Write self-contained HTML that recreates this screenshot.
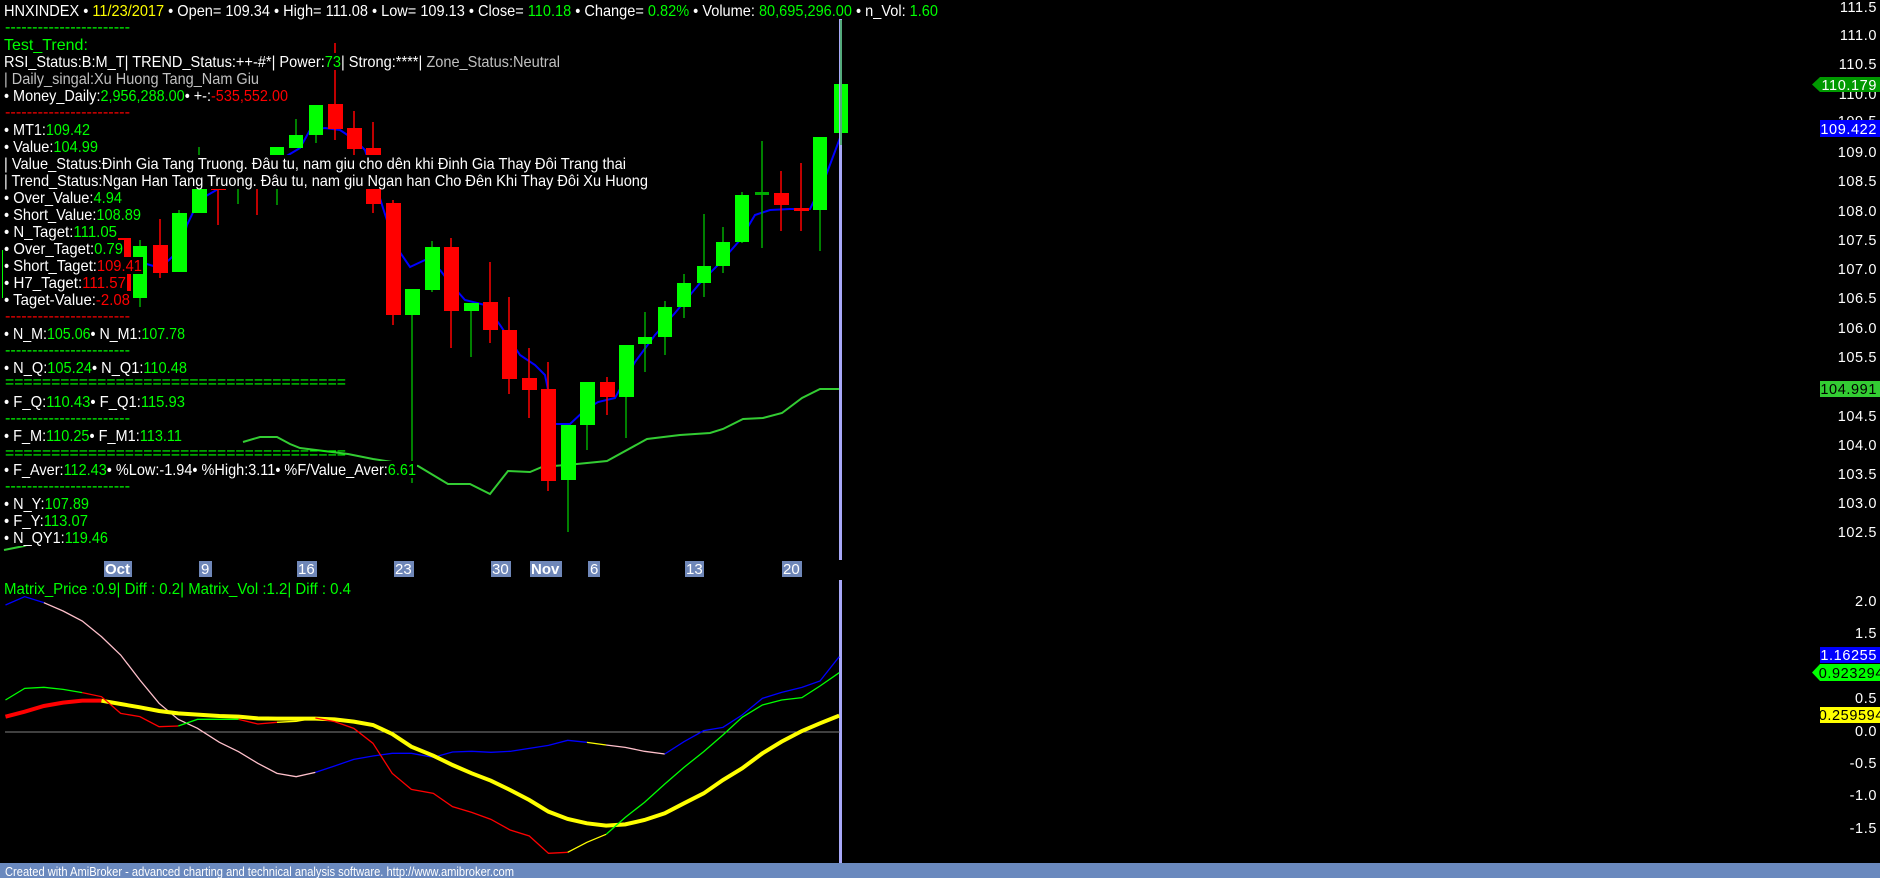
<!DOCTYPE html>
<html><head><meta charset="utf-8"><style>
html,body{margin:0;padding:0;background:#000;width:1880px;height:878px;overflow:hidden}
svg{display:block}
text{font-family:"Liberation Sans",Arial,sans-serif;font-size:16px;fill:#fff}
.g{fill:#00ff00}.r{fill:#ff0000}.y{fill:#ffff00}.s{fill:#c0c0c0}
.ax{font-size:14.5px;letter-spacing:0.6px;text-anchor:end}
.dl{font-size:15px;fill:#fff}
</style></head><body>
<svg width="1880" height="878" viewBox="0 0 1880 878" xmlns="http://www.w3.org/2000/svg">
<rect width="1880" height="878" fill="#000"/>

<!-- green value line -->
<polyline fill="none" stroke="#33cc33" stroke-width="2" points="4,550 24,546 32,543"/>
<polyline fill="none" stroke="#33cc33" stroke-width="2" points="243,442 260,437 277,437 290,444 300,448 348,454 373,459 418,466 448,484 470,484 490,494 508,471 530,472 542,467 577,464 607,461 647,439 680,435 710,433 723,429 743,419 763,418 782,413 802,398 820,389 840,389"/>

<!-- blue MA -->
<polyline fill="none" stroke="#0000ff" stroke-width="2" points="140,262 160,268 180,250 187,225 199,200 220,188 240,185 260,176 280,160 300,148 310,130 325,128 340,130 355,140 365,150 383,208 395,245 410,267 425,260 440,270 450,283 465,300 485,305 500,325 520,355 535,365 545,375 555,424 570,424 585,410 598,402 615,398 635,362 655,335 675,313 700,283 720,263 740,240 755,215 770,210 790,209 810,209 825,178 840,138"/>

<!-- candles -->
<g stroke-width="1.5">
<line x1="124" y1="238" x2="124" y2="300" stroke="#f00"/><rect x="117" y="238" width="14" height="59" fill="#f00"/>
<line x1="140" y1="240" x2="140" y2="307" stroke="#0a0"/><rect x="133" y="246" width="14" height="52" fill="#0f0"/>
<line x1="160" y1="219" x2="160" y2="278" stroke="#f00"/><rect x="153" y="245" width="15" height="28" fill="#f00"/>
<line x1="179" y1="210" x2="179" y2="272" stroke="#0a0"/><rect x="172" y="213" width="15" height="59" fill="#0f0"/>
<line x1="199" y1="147" x2="199" y2="213" stroke="#0a0"/><rect x="192" y="188" width="15" height="25" fill="#0f0"/>
<line x1="218" y1="180" x2="218" y2="225" stroke="#f00"/><rect x="211" y="185" width="15" height="5" fill="#f00"/>
<line x1="238" y1="170" x2="238" y2="204" stroke="#0a0"/><rect x="231" y="185" width="15" height="4" fill="#0f0"/>
<line x1="257" y1="170" x2="257" y2="215" stroke="#f00"/><rect x="250" y="172" width="15" height="17" fill="#f00"/>
<line x1="277" y1="147" x2="277" y2="205" stroke="#0a0"/><rect x="270" y="147" width="14" height="42" fill="#0f0"/>
<line x1="296" y1="119" x2="296" y2="148" stroke="#0a0"/><rect x="289" y="135" width="14" height="13" fill="#0f0"/>
<line x1="316" y1="105" x2="316" y2="143" stroke="#0a0"/><rect x="309" y="105" width="14" height="30" fill="#0f0"/>
<line x1="335" y1="43" x2="335" y2="140" stroke="#f00"/><rect x="328" y="104" width="15" height="25" fill="#f00"/>
<line x1="354" y1="111" x2="354" y2="155" stroke="#f00"/><rect x="347" y="128" width="15" height="21" fill="#f00"/>
<line x1="373" y1="122" x2="373" y2="213" stroke="#f00"/><rect x="366" y="148" width="15" height="56" fill="#f00"/>
<line x1="393" y1="200" x2="393" y2="325" stroke="#f00"/><rect x="386" y="203" width="15" height="112" fill="#f00"/>
<line x1="412" y1="289" x2="412" y2="483" stroke="#0a0"/><rect x="405" y="289" width="15" height="26" fill="#0f0"/>
<line x1="432" y1="241" x2="432" y2="292" stroke="#0a0"/><rect x="425" y="247" width="15" height="43" fill="#0f0"/>
<line x1="451" y1="238" x2="451" y2="348" stroke="#f00"/><rect x="444" y="247" width="15" height="64" fill="#f00"/>
<line x1="471" y1="303" x2="471" y2="357" stroke="#0a0"/><rect x="464" y="303" width="15" height="8" fill="#0f0"/>
<line x1="490" y1="262" x2="490" y2="343" stroke="#f00"/><rect x="483" y="302" width="15" height="28" fill="#f00"/>
<line x1="509" y1="297" x2="509" y2="394" stroke="#f00"/><rect x="502" y="330" width="15" height="49" fill="#f00"/>
<line x1="529" y1="348" x2="529" y2="418" stroke="#f00"/><rect x="522" y="378" width="15" height="12" fill="#f00"/>
<line x1="548" y1="362" x2="548" y2="491" stroke="#f00"/><rect x="541" y="389" width="15" height="92" fill="#f00"/>
<line x1="568" y1="425" x2="568" y2="532" stroke="#0a0"/><rect x="561" y="425" width="15" height="55" fill="#0f0"/>
<line x1="587" y1="382" x2="587" y2="450" stroke="#0a0"/><rect x="580" y="382" width="15" height="43" fill="#0f0"/>
<line x1="607" y1="377" x2="607" y2="415" stroke="#f00"/><rect x="600" y="382" width="15" height="15" fill="#f00"/>
<line x1="626" y1="345" x2="626" y2="438" stroke="#0a0"/><rect x="619" y="345" width="15" height="52" fill="#0f0"/>
<line x1="645" y1="312" x2="645" y2="372" stroke="#0a0"/><rect x="638" y="337" width="14" height="7" fill="#0f0"/>
<line x1="665" y1="301" x2="665" y2="355" stroke="#0a0"/><rect x="658" y="307" width="14" height="30" fill="#0f0"/>
<line x1="684" y1="274" x2="684" y2="318" stroke="#0a0"/><rect x="677" y="283" width="14" height="24" fill="#0f0"/>
<line x1="704" y1="214" x2="704" y2="297" stroke="#0a0"/><rect x="697" y="266" width="14" height="17" fill="#0f0"/>
<line x1="723" y1="227" x2="723" y2="273" stroke="#0a0"/><rect x="716" y="242" width="14" height="24" fill="#0f0"/>
<line x1="742" y1="192" x2="742" y2="243" stroke="#0a0"/><rect x="735" y="195" width="14" height="47" fill="#0f0"/>
<line x1="762" y1="141" x2="762" y2="248" stroke="#0a0"/><rect x="755" y="192" width="14" height="3" fill="#0a0"/>
<line x1="781" y1="171" x2="781" y2="231" stroke="#f00"/><rect x="774" y="193" width="15" height="12" fill="#f00"/>
<line x1="801" y1="163" x2="801" y2="231" stroke="#f00"/><rect x="794" y="208" width="15" height="3" fill="#f00"/>
<line x1="820" y1="137" x2="820" y2="251" stroke="#0a0"/><rect x="813" y="137" width="14" height="73" fill="#0f0"/>
<rect x="834" y="84" width="14" height="49" fill="#0f0"/>
</g>

<!-- cursor line -->
<rect x="839" y="18" width="3" height="542" fill="#a8a8f8"/>
<line x1="841" y1="20" x2="841" y2="145" stroke="#0a0" stroke-width="1"/>
<rect x="839" y="580" width="3" height="283" fill="#a8a8f8"/>

<!-- left green bar -->
<rect x="2" y="250" width="3" height="48" fill="#0f0"/>

<!-- text with black backgrounds -->
<g fill="#000">
<rect x="3" y="1" width="937" height="18"/>
<rect x="3" y="36" width="86" height="17"/>
<rect x="3" y="53" width="558" height="17"/>
<rect x="3" y="70" width="257" height="17"/>
<rect x="3" y="87" width="286" height="17"/>
<rect x="3" y="121" width="88" height="17"/>
<rect x="3" y="138" width="96" height="17"/>
<rect x="3" y="155" width="624" height="17"/>
<rect x="3" y="172" width="646" height="17"/>
<rect x="3" y="189" width="120" height="17"/>
<rect x="3" y="206" width="139" height="17"/>
<rect x="3" y="223" width="115" height="17"/>
<rect x="3" y="240" width="121" height="17"/>
<rect x="3" y="257" width="140" height="17"/>
<rect x="3" y="274" width="124" height="17"/>
<rect x="3" y="291" width="128" height="17"/>
<rect x="3" y="325" width="183" height="17"/>
<rect x="3" y="359" width="185" height="17"/>
<rect x="3" y="393" width="183" height="17"/>
<rect x="3" y="427" width="180" height="17"/>
<rect x="3" y="461" width="414" height="17"/>
<rect x="3" y="495" width="87" height="17"/>
<rect x="3" y="512" width="86" height="17"/>
<rect x="3" y="529" width="106" height="17"/>
</g>

<text x="4" y="16" textLength="934" lengthAdjust="spacingAndGlyphs">HNXINDEX • <tspan class="y">11/23/2017</tspan> • Open= 109.34 • High= 111.08 • Low= 109.13 • Close= <tspan class="g">110.18</tspan> • Change= <tspan class="g">0.82%</tspan> • Volume: <tspan class="g">80,695,296.00</tspan> • n_Vol: <tspan class="g">1.60</tspan></text>
<text class="g" x="5" y="32" textLength="125" lengthAdjust="spacingAndGlyphs">-----------------------</text>
<text class="g" x="4" y="50">Test_Trend:</text>
<text x="4" y="67" textLength="556" lengthAdjust="spacingAndGlyphs">RSI_Status:B:M_T| TREND_Status:++-#*| Power:<tspan class="g">73</tspan>| Strong:****| <tspan class="s">Zone_Status:Neutral</tspan></text>
<text class="s" x="4" y="84" textLength="255" lengthAdjust="spacingAndGlyphs">| Daily_singal:Xu Huong Tang_Nam Giu</text>
<text x="4" y="101" textLength="284" lengthAdjust="spacingAndGlyphs">• Money_Daily:<tspan class="g">2,956,288.00</tspan>• +-:<tspan class="r">-535,552.00</tspan></text>
<text class="r" x="5" y="117" textLength="125" lengthAdjust="spacingAndGlyphs">-----------------------</text>
<text x="4" y="135" textLength="86" lengthAdjust="spacingAndGlyphs">• MT1:<tspan class="g">109.42</tspan></text>
<text x="4" y="152" textLength="94" lengthAdjust="spacingAndGlyphs">• Value:<tspan class="g">104.99</tspan></text>
<text x="4" y="169" textLength="622" lengthAdjust="spacingAndGlyphs">| Value_Status:Đinh Gia Tang Truong. Đâu tu, nam giu cho dên khi Đinh Gia Thay Đôi Trang thai</text>
<text x="4" y="186" textLength="644" lengthAdjust="spacingAndGlyphs">| Trend_Status:Ngan Han Tang Truong. Đâu tu, nam giu Ngan han Cho Đên Khi Thay Đôi Xu Huong</text>
<text x="4" y="203" textLength="118" lengthAdjust="spacingAndGlyphs">• Over_Value:<tspan class="g">4.94</tspan></text>
<text x="4" y="220" textLength="137" lengthAdjust="spacingAndGlyphs">• Short_Value:<tspan class="g">108.89</tspan></text>
<text x="4" y="237" textLength="113" lengthAdjust="spacingAndGlyphs">• N_Taget:<tspan class="g">111.05</tspan></text>
<text x="4" y="254" textLength="119" lengthAdjust="spacingAndGlyphs">• Over_Taget:<tspan class="g">0.79</tspan></text>
<text x="4" y="271" textLength="138" lengthAdjust="spacingAndGlyphs">• Short_Taget:<tspan class="r">109.41</tspan></text>
<text x="4" y="288" textLength="122" lengthAdjust="spacingAndGlyphs">• H7_Taget:<tspan class="r">111.57</tspan></text>
<text x="4" y="305" textLength="126" lengthAdjust="spacingAndGlyphs">• Taget-Value:<tspan class="r">-2.08</tspan></text>
<text class="r" x="5" y="321" textLength="125" lengthAdjust="spacingAndGlyphs">-----------------------</text>
<text x="4" y="339" textLength="181" lengthAdjust="spacingAndGlyphs">• N_M:<tspan class="g">105.06</tspan>• N_M1:<tspan class="g">107.78</tspan></text>
<text class="g" x="5" y="355" textLength="125" lengthAdjust="spacingAndGlyphs">-----------------------</text>
<text x="4" y="373" textLength="183" lengthAdjust="spacingAndGlyphs">• N_Q:<tspan class="g">105.24</tspan>• N_Q1:<tspan class="g">110.48</tspan></text>
<text class="g" x="5" y="387" textLength="341" lengthAdjust="spacingAndGlyphs">=====================================</text>
<text x="4" y="407" textLength="181" lengthAdjust="spacingAndGlyphs">• F_Q:<tspan class="g">110.43</tspan>• F_Q1:<tspan class="g">115.93</tspan></text>
<text class="g" x="5" y="423" textLength="125" lengthAdjust="spacingAndGlyphs">-----------------------</text>
<text x="4" y="441" textLength="178" lengthAdjust="spacingAndGlyphs">• F_M:<tspan class="g">110.25</tspan>• F_M1:<tspan class="g">113.11</tspan></text>
<text class="g" x="5" y="458" textLength="341" lengthAdjust="spacingAndGlyphs">=====================================</text>
<text x="4" y="475" textLength="412" lengthAdjust="spacingAndGlyphs">• F_Aver:<tspan class="g">112.43</tspan>• %Low:-1.94• %High:3.11• %F/Value_Aver:<tspan class="g">6.61</tspan></text>
<text class="g" x="5" y="491" textLength="125" lengthAdjust="spacingAndGlyphs">-----------------------</text>
<text x="4" y="509" textLength="85" lengthAdjust="spacingAndGlyphs">• N_Y:<tspan class="g">107.89</tspan></text>
<text x="4" y="526" textLength="84" lengthAdjust="spacingAndGlyphs">• F_Y:<tspan class="g">113.07</tspan></text>
<text x="4" y="543" textLength="104" lengthAdjust="spacingAndGlyphs">• N_QY1:<tspan class="g">119.46</tspan></text>

<!-- date axis -->
<g fill="#6f87b8">
<rect x="104" y="561" width="28" height="16"/><rect x="199" y="561" width="13" height="16"/>
<rect x="297" y="561" width="20" height="16"/><rect x="394" y="561" width="20" height="16"/>
<rect x="491" y="561" width="20" height="16"/><rect x="530" y="561" width="32" height="16"/>
<rect x="588" y="561" width="12" height="16"/><rect x="685" y="561" width="19" height="16"/>
<rect x="782" y="561" width="20" height="16"/>
</g>
<g class="dl">
<text class="dl" x="105" y="574" font-weight="bold">Oct</text>
<text class="dl" x="201" y="574">9</text>
<text class="dl" x="298" y="574">16</text>
<text class="dl" x="395" y="574">23</text>
<text class="dl" x="492" y="574">30</text>
<text class="dl" x="531" y="574" font-weight="bold">Nov</text>
<text class="dl" x="590" y="574">6</text>
<text class="dl" x="686" y="574">13</text>
<text class="dl" x="783" y="574">20</text>
</g>

<!-- price axis -->
<g>
<text class="ax" x="1877" y="12">111.5</text>
<text class="ax" x="1877" y="40">111.0</text>
<text class="ax" x="1877" y="69">110.5</text>
<text class="ax" x="1877" y="99">110.0</text>
<text class="ax" x="1877" y="126">109.5</text>
<text class="ax" x="1877" y="157">109.0</text>
<text class="ax" x="1877" y="186">108.5</text>
<text class="ax" x="1877" y="216">108.0</text>
<text class="ax" x="1877" y="245">107.5</text>
<text class="ax" x="1877" y="274">107.0</text>
<text class="ax" x="1877" y="303">106.5</text>
<text class="ax" x="1877" y="333">106.0</text>
<text class="ax" x="1877" y="362">105.5</text>
<text class="ax" x="1877" y="421">104.5</text>
<text class="ax" x="1877" y="450">104.0</text>
<text class="ax" x="1877" y="479">103.5</text>
<text class="ax" x="1877" y="508">103.0</text>
<text class="ax" x="1877" y="537">102.5</text>
</g>
<polygon points="1812,84.5 1820,77 1880,77 1880,92 1820,92" fill="#009900"/>
<text class="ax" x="1877" y="90">110.179</text>
<rect x="1820" y="120" width="60" height="17" fill="#0000ff"/>
<text class="ax" x="1877" y="134">109.422</text>
<rect x="1820" y="381" width="60" height="16" fill="#33cc33"/>
<text class="ax" x="1877" y="394" style="fill:#000">104.991</text>

<!-- bottom pane -->
<text class="g" x="4" y="594" textLength="347" lengthAdjust="spacingAndGlyphs">Matrix_Price :0.9|  Diff : 0.2| Matrix_Vol :1.2|  Diff : 0.4</text>
<line x1="5" y1="732" x2="840" y2="732" stroke="#808080" stroke-width="1"/>
<g transform="translate(0,580) scale(0.5485,0.33333)" fill="none">
<polyline vector-effect="non-scaling-stroke" stroke="#0000ff" stroke-width="1.3" points="10,75 45,50 80,68"/>
<polyline vector-effect="non-scaling-stroke" stroke="#ffc0cb" stroke-width="1.3" points="80,68 115,93 150,123 185,170 220,225 255,300 290,370 325,418 360,445 400,487 435,515 470,550 505,580 540,590 575,577"/>
<polyline vector-effect="non-scaling-stroke" stroke="#0000ff" stroke-width="1.3" points="575,577 610,558 645,538 680,528 715,520 750,520 790,532 825,516 860,514 895,517 930,514 965,505 1000,496 1035,481 1070,487"/>
<polyline vector-effect="non-scaling-stroke" stroke="#ffff00" stroke-width="1.3" points="1070,487 1105,495"/>
<polyline vector-effect="non-scaling-stroke" stroke="#ffc0cb" stroke-width="1.3" points="1105,495 1140,502 1175,514 1212,522"/>
<polyline vector-effect="non-scaling-stroke" stroke="#0000ff" stroke-width="1.3" points="1212,522 1247,485 1283,452 1318,442 1353,405 1390,355 1425,337 1462,322 1495,303 1530,230"/>

<polyline vector-effect="non-scaling-stroke" stroke="#ff0000" stroke-width="4" points="10,410 45,395 80,378 115,368 150,362 185,362"/>
<polyline vector-effect="non-scaling-stroke" stroke="#ffff00" stroke-width="4" points="185,362 220,372 255,382 290,393 325,400 360,404 400,408 435,410 470,415 505,416 540,416 575,416 610,418 645,425 680,435 715,462 750,500 790,527 825,555 860,580 895,602 930,630 965,660 1000,695 1035,717 1070,730 1105,737 1140,733 1175,720 1212,700 1247,670 1283,640 1318,600 1353,565 1390,520 1425,485 1462,453 1495,430 1530,407"/>

<polyline vector-effect="non-scaling-stroke" stroke="#00ff00" stroke-width="1.3" points="10,360 45,325 80,322 115,328 150,338"/>
<polyline vector-effect="non-scaling-stroke" stroke="#ff0000" stroke-width="1.3" points="150,338 185,350 220,400 255,410 290,440 325,438"/>
<polyline vector-effect="non-scaling-stroke" stroke="#00ff00" stroke-width="1.3" points="325,438 360,418 400,418 435,418"/>
<polyline vector-effect="non-scaling-stroke" stroke="#ff0000" stroke-width="1.3" points="435,418 470,432 505,427"/>
<polyline vector-effect="non-scaling-stroke" stroke="#ffff00" stroke-width="1.3" points="505,427 540,424 575,414"/>
<polyline vector-effect="non-scaling-stroke" stroke="#ff0000" stroke-width="1.3" points="575,414 610,425 645,445 680,490 715,580 750,628 790,640 825,680 860,697 895,718 930,750 965,768 1000,820 1035,817"/>
<polyline vector-effect="non-scaling-stroke" stroke="#ffff00" stroke-width="1.3" points="1035,817 1070,787 1105,763"/>
<polyline vector-effect="non-scaling-stroke" stroke="#00ff00" stroke-width="1.3" points="1105,763 1140,712 1175,667 1212,612 1247,562 1283,515 1318,465 1353,412 1390,375 1425,360 1462,353 1495,318 1530,278"/>
</g>

<g>
<text class="ax" x="1877" y="606">2.0</text>
<text class="ax" x="1877" y="638">1.5</text>
<text class="ax" x="1877" y="703">0.5</text>
<text class="ax" x="1877" y="736">0.0</text>
<text class="ax" x="1877" y="768">-0.5</text>
<text class="ax" x="1877" y="800">-1.0</text>
<text class="ax" x="1877" y="833">-1.5</text>
</g>
<rect x="1820" y="647" width="60" height="16" fill="#0000ff"/>
<text class="ax" x="1877" y="660">1.16255</text>
<polygon points="1812,672.5 1820,664 1880,664 1880,681 1820,681" fill="#00ff00"/>
<text class="ax" x="1884" y="678" style="fill:#000">0.923294</text>
<rect x="1820" y="707" width="60" height="16" fill="#ffff00"/>
<text class="ax" x="1884" y="720" style="fill:#000">0.259594</text>

<!-- footer -->
<rect x="0" y="863" width="1880" height="15" fill="#6a89be"/>
<text x="5" y="876" style="font-size:13px" textLength="509" lengthAdjust="spacingAndGlyphs">Created with AmiBroker - advanced charting and technical analysis software. http://www.amibroker.com</text>
</svg>
</body></html>
